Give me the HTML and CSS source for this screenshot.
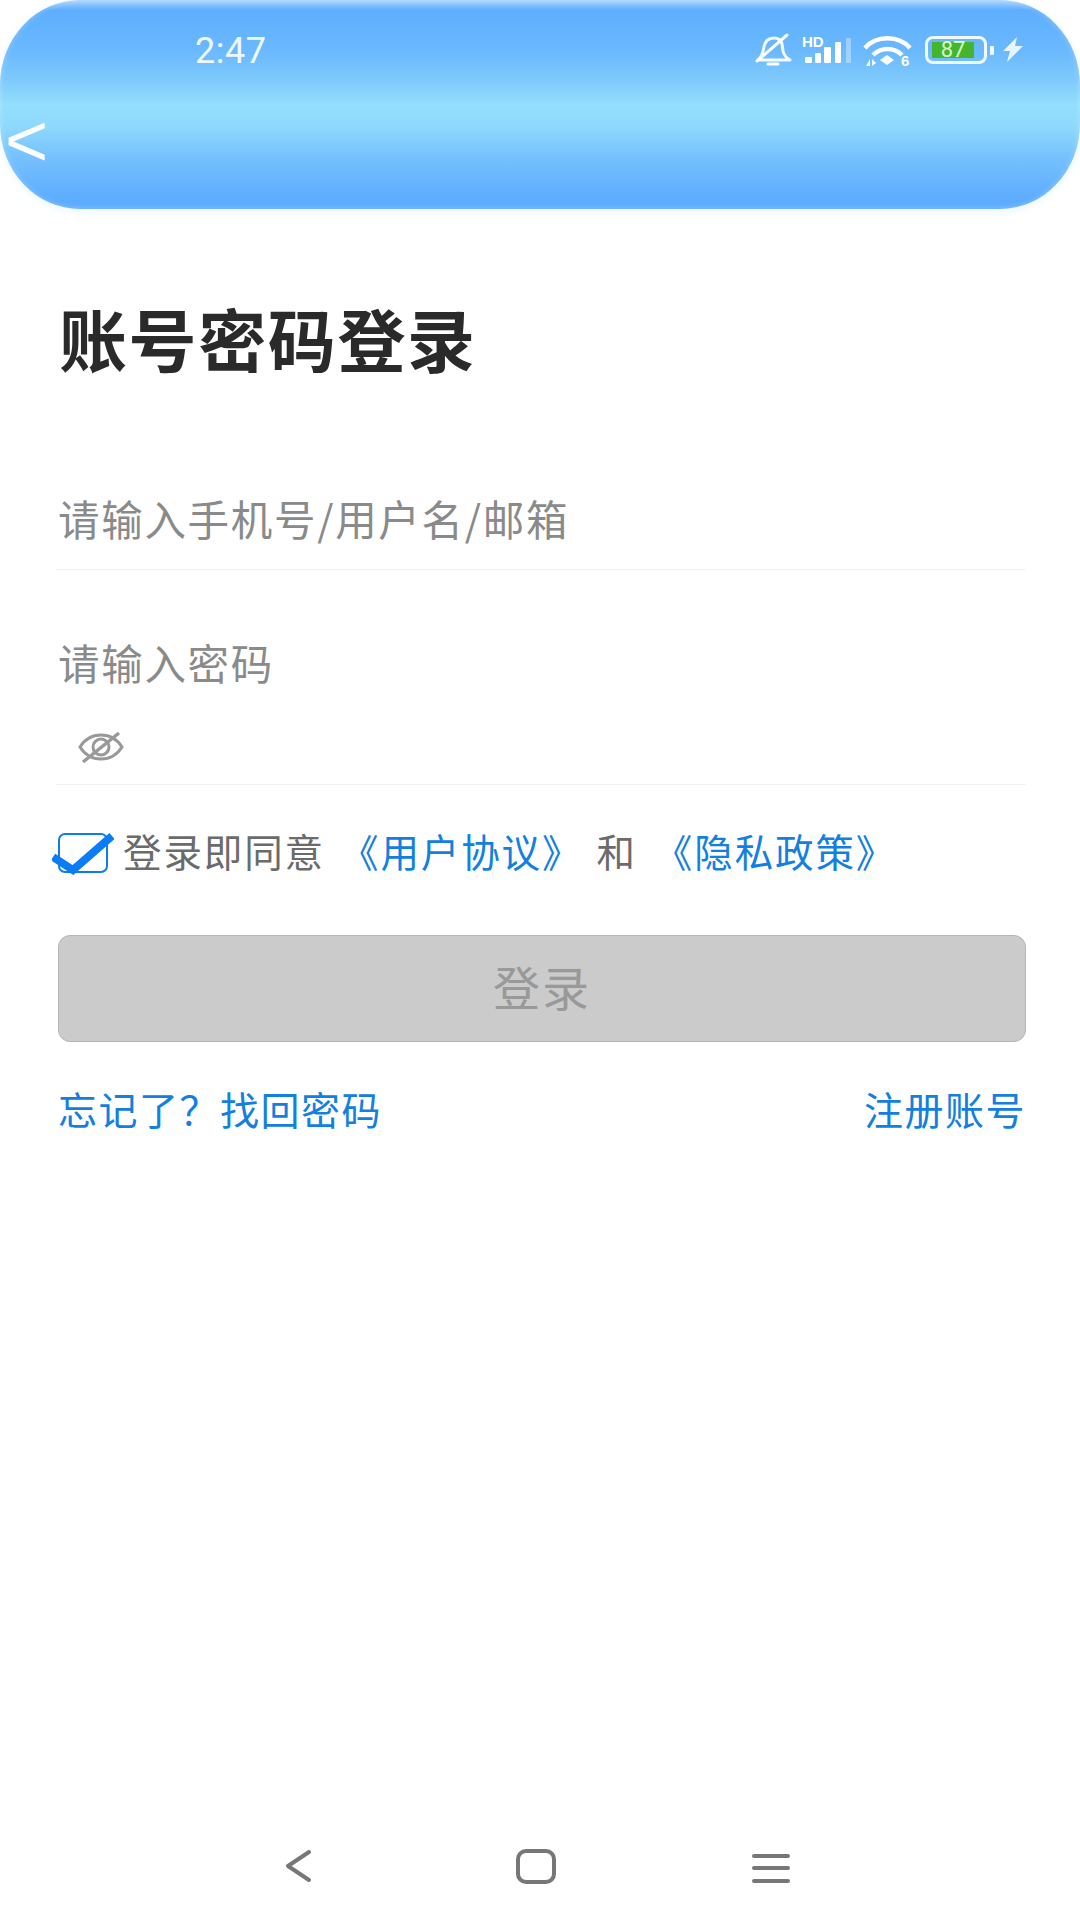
FILE: index.html
```html
<!DOCTYPE html>
<html lang="zh">
<head>
<meta charset="utf-8">
<title>账号密码登录</title>
<link rel="stylesheet" href="styles.css">
</head>
<body>
<div class="page">
  <header class="top">
    <div class="status">
      <span class="time">2:47</span>
      <div class="icons">
        <svg class="i-bell" width="38" height="34" viewBox="0 0 38 34"><path d="M4 27c4-3 5-7 6-13 1-6 5-9 10-9 4 0 7 2 8 6l1 7c1 4 3 7 7 9z" fill="none" stroke="#f4fbff" stroke-width="3" stroke-linejoin="round"/><path d="M3 28L33 2" stroke="#fff" stroke-width="3" stroke-linecap="round"/><path d="M14 31h10" stroke="#fff" stroke-width="3" stroke-linecap="round"/></svg>
        <svg class="i-signal" width="50" height="34" viewBox="0 0 50 34"><text x="0" y="14" class="hd">HD</text><g fill="#fff"><rect x="3" y="24" width="7" height="6" rx="1"/><rect x="13" y="20" width="6" height="10" rx="1"/><rect x="22" y="14" width="7" height="16" rx="1"/><rect x="33" y="9" width="6" height="21" rx="1"/><rect x="44" y="5" width="5" height="25" rx="1" opacity=".35"/></g></svg>
        <svg class="i-wifi" width="50" height="40" viewBox="0 0 50 40"><g fill="none" stroke="#fff" stroke-width="4.5"><path d="M2 15C13 2 36 2 47 15"/><path d="M10 22c8-8 21-8 29 0"/></g><path d="M17 27l7-5 7 5-7 5z" fill="#fff"/><text x="38" y="33" class="six">6</text><path d="M3 33l4-7v7zM9 26v7l4-3z" fill="#fff"/></svg>
        <div class="battery"><div class="cell"><div class="fill">87</div></div><div class="nub"></div></div>
        <svg class="i-bolt" width="20" height="26" viewBox="0 0 20 26"><path d="M14 0L0 14h7L4 25 20 9h-8z" fill="#e6f5ff"/></svg>
      </div>
    </div>
    <div class="nav"><span class="back">&lt;</span></div>
  </header>

  <main class="content">
    <h1 class="title">账号密码登录</h1>
    <div class="field first"><span class="ph">请输入手机号/用户名/邮箱</span></div>
    <div class="field second">
      <span class="ph">请输入密码</span>
      <svg class="eye" width="46" height="34" viewBox="0 0 46 34"><g fill="none" stroke="#999" stroke-width="3"><path d="M2 17C7 9 14 5 23 5s16 4 21 12c-5 8-12 12-21 12S7 25 2 17z"/><circle cx="23" cy="17" r="8"/><path d="M5 32L41 3" stroke-width="3.4"/></g></svg>
    </div>
    <div class="agree">
      <span class="check"><svg width="62" height="46" viewBox="0 0 62 46"><path d="M1 28l20 13L60 7" fill="none" stroke="#0a7cf5" stroke-width="8"/></svg></span>
      <span class="txt">登录即同意</span>
      <a class="link l1">《用户协议》</a>
      <span class="txt and">和</span>
      <a class="link l2">《隐私政策》</a>
    </div>
    <button class="login">登录</button>
    <div class="links"><a class="link">忘记了？找回密码</a><a class="link">注册账号</a></div>
  </main>

  <nav class="sysnav">
    <svg width="30" height="36" viewBox="0 0 30 36"><path d="M25 3L4 17l21 14" fill="none" stroke="#777" stroke-width="4" stroke-linecap="round" stroke-linejoin="round"/></svg>
    <svg width="40" height="36" viewBox="0 0 40 36"><rect x="2" y="2" width="36" height="31" rx="8" fill="none" stroke="#777" stroke-width="4"/></svg>
    <svg class="menu" width="38" height="34" viewBox="0 0 38 34"><path d="M2 5h34M2 17h34M2 30h34" stroke="#777" stroke-width="4" stroke-linecap="round"/></svg>
  </nav>
</div>
</body>
</html>
```
FILE: styles.css
```css
html, body { margin: 0; padding: 0; background: #fff; }
body { width: 1080px; height: 1920px; overflow: hidden; font-family: "Noto Sans CJK SC", "Noto Sans", sans-serif; }
.page { width: 1080px; height: 1920px; display: flex; flex-direction: column; }
.top {
  height: 209px; flex: none; border-radius: 80px / 85px;
  background: linear-gradient(180deg, #a9d5fd 0, #5eaeff 10px, #6ab8fe 50px, #7ec9fb 80px, #93dffc 105px, #8fdafc 125px, #74bffd 160px, #5cacff 200px, #5cacff 209px);
  box-shadow: 0 2px 10px rgba(150, 210, 250, .2), inset 0 0 6px rgba(255, 255, 255, .3);
  display: flex; flex-direction: column;
}
.status { height: 100px; display: flex; align-items: center; justify-content: space-between; padding: 0 57px 0 195px; box-sizing: border-box; }
.time { font-family: "Roboto", sans-serif; font-size: 36px; color: #eef8ff; letter-spacing: .5px; margin-top: 2px; }
.icons { display: flex; align-items: center; }
.hd { font: 700 15px "Liberation Sans", sans-serif; fill: #fff; }
.six { font: 700 15px "Liberation Sans", sans-serif; fill: #fff; }
.i-signal { margin-left: 10px; }
.i-wifi { margin: 6px 0 0 11px; }
.battery { display: flex; align-items: center; gap: 3px; margin-left: 12px; }
.cell { width: 47px; height: 16px; border: 3px solid #f0f9ff; border-radius: 8px; padding: 3px 5px 3px 4px; box-sizing: content-box; display: flex; }
.fill { width: 42px; background: #46b52e; color: #d8ffc9; font: 22px/16px "Roboto", sans-serif; text-align: center; }
.nub { width: 4px; height: 9px; background: #f0f9ff; border-radius: 1px; }
.i-bolt { margin-left: 9px; }
.nav { flex: 1; display: flex; align-items: flex-start; }
.back { font: 74px/1 "Liberation Sans", sans-serif; color: #fff; margin: 4px 0 0 5px; }
.content { flex: 1; padding: 0 54px 0 58px; }
.title { margin: 91px 0 0 1px; font-size: 68px; line-height: 76px; font-weight: 700; color: #2a2a2a; letter-spacing: 1.6px; }
.ph { color: #8a8a8a; font-size: 41.5px; letter-spacing: 1.7px; display: block; line-height: 50px; }
.field { border-bottom: 1px solid #f2f2f2; margin-left: -2px; padding-left: 2px; }
.first { margin-top: 117px; height: 76px; }
.second { margin-top: 67px; height: 147px; display: flex; flex-direction: column; }
.eye { margin: 43px 0 0 20px; }
.agree { display: flex; align-items: center; margin-top: 40px; height: 50px; color: #6b6b6b; font-size: 38.5px; letter-spacing: 1.9px; }
.check { width: 46px; height: 36px; border: 2px solid #0a7cf5; border-radius: 7px; position: relative; flex: none; margin-top: 6px; }
.check svg { position: absolute; left: -8px; top: -6px; }
.txt { margin-left: 15px; }
.link { color: #1380df; }
.l1 { margin-left: 15px; }
.and { margin-left: 14px; }
.l2 { margin-left: 17px; }
.login { display: block; width: 968px; height: 107px; margin: 60px 0 0; padding: 0 0 6px; background: #cbcbcb; border: 1px solid #b5b5b5; border-radius: 12px; color: #999; font: 47px "Noto Sans CJK SC", sans-serif; letter-spacing: 2px; }
.links { display: flex; justify-content: space-between; margin-top: 41px; font-size: 39px; line-height: 50px; letter-spacing: 1.5px; }
.sysnav { height: 100px; flex: none; box-sizing: border-box; display: flex; gap: 202px; align-items: flex-start; padding: 29px 0 0 284px; }
.menu { margin-left: -6px; margin-top: 2px; }
```
